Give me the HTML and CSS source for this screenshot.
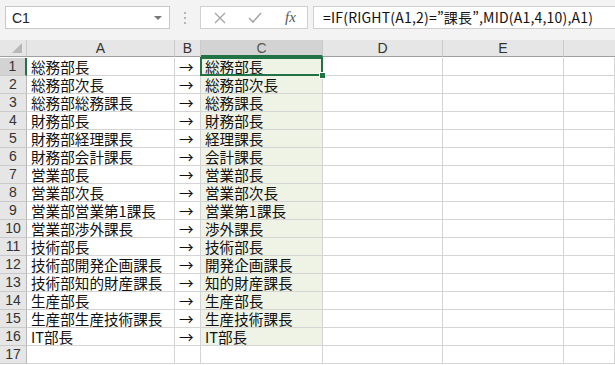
FILE: index.html
```html
<!DOCTYPE html>
<html lang="ja">
<head>
    <meta charset="UTF-8">
    <title>Book1 - Excel</title>
    <link rel="stylesheet" href="styles.css">
</head>
<body>
    <div class="toolbar">
        <div class="namebox">
            <span>C1</span>
            <span class="drop"></span>
        </div>
        <div class="grip">
            <i></i><i></i><i></i>
        </div>
        <div class="fx-buttons">
            <svg class="btn" width="14" height="14" viewBox="0 0 14 14">
                <path d="M2 2 L12 12 M12 2 L2 12" stroke="#a6a6a6" stroke-width="1.4" fill="none"/>
            </svg>
            <svg class="btn" width="16" height="14" viewBox="0 0 16 14">
                <path d="M2 7 L6 11 L14 2" stroke="#a6a6a6" stroke-width="1.6" fill="none"/>
            </svg>
            <span class="fx">fx</span>
        </div>
        <div class="formula">=IF(RIGHT(A1,2)=”課長”,MID(A1,4,10),A1)</div>
    </div>

    <div class="sheet">
        <div class="corner"><span class="tri"></span></div>
        <div class="colhead">A</div>
        <div class="colhead">B</div>
        <div class="colhead active">C</div>
        <div class="colhead">D</div>
        <div class="colhead">E</div>
        <div class="colhead last"></div>
    </div>

    <div class="sheet" id="rows"></div>

    <script>
        const data = [
            ["総務部長", "総務部長"],
            ["総務部次長", "総務部次長"],
            ["総務部総務課長", "総務課長"],
            ["財務部長", "財務部長"],
            ["財務部経理課長", "経理課長"],
            ["財務部会計課長", "会計課長"],
            ["営業部長", "営業部長"],
            ["営業部次長", "営業部次長"],
            ["営業部営業第1課長", "営業第1課長"],
            ["営業部渉外課長", "渉外課長"],
            ["技術部長", "技術部長"],
            ["技術部開発企画課長", "開発企画課長"],
            ["技術部知的財産課長", "知的財産課長"],
            ["生産部長", "生産部長"],
            ["生産部生産技術課長", "生産技術課長"],
            ["IT部長", "IT部長"]
        ];

        const rows = document.getElementById("rows");
        let html = "";

        data.forEach((row, i) => {
            const n = i + 1;
            html += `
                <div class="rowhead${n === 1 ? " active" : ""}">${n}</div>
                <div class="cell">${row[0]}</div>
                <div class="cell">→</div>
                <div class="cell fill${n === 1 ? " selected" : ""}">${row[1]}</div>
                <div class="cell"></div>
                <div class="cell"></div>
                <div class="cell"></div>
            `;
        });

        html += `
            <div class="rowhead">17</div>
            <div class="cell"></div>
            <div class="cell"></div>
            <div class="cell"></div>
            <div class="cell"></div>
            <div class="cell"></div>
            <div class="cell"></div>
        `;

        rows.innerHTML = html;
    </script>
</body>
</html>
```

FILE: styles.css
```css
body {
    margin: 0;
    font-family: "Noto Sans CJK JP", "Liberation Sans", sans-serif;
    background-color: #fff;
    color: #111;
    overflow: hidden;
}

.toolbar {
    height: 40px;
    background-color: #f3f3f3;
    display: flex;
    align-items: flex-start;
    padding-top: 6px;
    box-sizing: border-box;
    white-space: nowrap;
}

.namebox {
    margin-left: 5px;
    width: 165px;
    height: 23px;
    box-sizing: border-box;
    border: 1px solid #c8c8c8;
    background-color: #fff;
    display: flex;
    align-items: center;
    justify-content: space-between;
    padding: 0 7px 0 6px;
    font-family: "Liberation Sans", sans-serif;
    font-size: 14px;
    color: #222;
}

.drop {
    width: 0;
    height: 0;
    border-left: 4px solid transparent;
    border-right: 4px solid transparent;
    border-top: 4px solid #777;
}

.grip {
    width: 30px;
    height: 23px;
    display: flex;
    flex-direction: column;
    align-items: center;
    justify-content: center;
    gap: 3px;
}

.grip i {
    width: 2px;
    height: 2px;
    background-color: #b5b5b5;
}

.fx-buttons {
    width: 108px;
    height: 23px;
    box-sizing: border-box;
    border: 1px solid #d0d0d0;
    background-color: #fff;
    display: flex;
    align-items: center;
    padding-left: 12px;
    gap: 20px;
}

.fx {
    font-family: "Liberation Serif", serif;
    font-style: italic;
    font-size: 15px;
    color: #555;
    margin-left: 2px;
}

.formula {
    margin-left: 5px;
    flex: 1;
    height: 23px;
    box-sizing: border-box;
    border: 1px solid #d0d0d0;
    border-right: none;
    background-color: #fff;
    padding-left: 9px;
    font-size: 14px;
    line-height: 21px;
    letter-spacing: 0.2px;
    color: #111;
    overflow: hidden;
}

.sheet {
    display: grid;
    grid-template-columns: 27px 148px 26px 122px 120px 121px 1fr;
    grid-auto-rows: 18px;
}

.sheet:first-of-type {
    grid-auto-rows: 17px;
}

.corner,
.colhead {
    height: 17px;
    box-sizing: border-box;
    background-color: #e6e6e6;
    border-right: 1px solid #cacaca;
    border-bottom: 1px solid #a0a0a0;
    text-align: center;
    font-family: "Liberation Sans", sans-serif;
    font-size: 14px;
    line-height: 17px;
    color: #333;
}

.corner {
    position: relative;
}

.tri {
    position: absolute;
    right: 4px;
    bottom: 3px;
    width: 0;
    height: 0;
    border-left: 10px solid transparent;
    border-bottom: 10px solid #b8b8b8;
}

.colhead.active {
    background-color: #d3d3d3;
    color: #555;
    border-bottom: 2px solid #217346;
}

.colhead.last {
    border-right: none;
}

.rowhead {
    box-sizing: border-box;
    background-color: #e6e6e6;
    border-right: 1px solid #b8b8b8;
    border-bottom: 1px solid #cacaca;
    text-align: center;
    font-family: "Liberation Sans", sans-serif;
    font-size: 14px;
    line-height: 17px;
    color: #333;
}

.rowhead.active {
    background-color: #d3d3d3;
    border-right: 2px solid #217346;
}

.cell {
    box-sizing: border-box;
    border-right: 1px solid #d4d4d4;
    border-bottom: 1px solid #d4d4d4;
    padding-left: 4px;
    font-size: 14.6px;
    line-height: 17px;
    white-space: nowrap;
    overflow: visible;
}

.cell.fill {
    background-color: #eff3e6;
}

.cell.selected {
    position: relative;
}

.cell.selected::before {
    content: "";
    position: absolute;
    left: -1px;
    top: -1px;
    right: -1px;
    bottom: -1px;
    border: 2px solid #217346;
}

.cell.selected::after {
    content: "";
    position: absolute;
    right: -4px;
    bottom: -4px;
    width: 5px;
    height: 5px;
    background-color: #217346;
    border: 1px solid #fff;
}
```
